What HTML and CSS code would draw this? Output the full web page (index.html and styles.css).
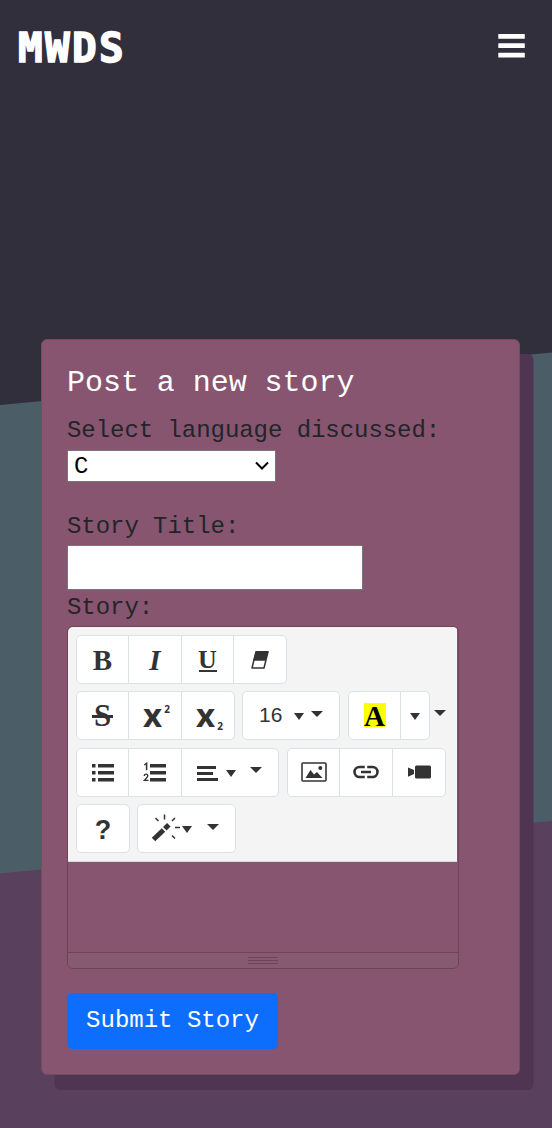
FILE: index.html
```html
<!DOCTYPE html>
<html lang="en">
<head>
<meta charset="utf-8">
<title>MWDS</title>
<link rel="stylesheet" href="styles.css">
</head>
<body>
<svg class="backdrop" viewBox="0 0 552 1128" preserveAspectRatio="none" aria-hidden="true"><path fill="#4b5d67" d="M0 405 552 352.500V1128H0z"/><path fill="#59405c" d="M0 873.500 552 821V1128H0z"/></svg>
<header class="navbar">
  <a class="brand">MWDS</a>
  <svg class="menu" width="28" height="26" viewBox="0 0 28 26" fill="#fff"><rect x=".3" y="1" width="26.500" height="4.800" rx=".6"/><rect x=".3" y="10.200" width="26.500" height="4.800" rx=".6"/><rect x=".3" y="19.700" width="26.500" height="4.800" rx=".6"/></svg>
</header>
<main class="card">
  <h1 class="title">Post a new story</h1>
  <label class="label">Select language discussed:</label>
  <div class="select"><span>C</span><svg width="16" height="12" viewBox="0 0 16 12" fill="none" stroke="#000" stroke-width="2"><path d="m2 2.500 6 6 6-6"/></svg></div>
  <label class="label label-title">Story Title:</label>
  <input class="input" type="text">
  <label class="label label-story">Story:</label>
  <section class="editor">
    <div class="toolbar">
      <div class="row">
        <div class="group">
          <button class="btn"><b class="glyph">B</b></button>
          <button class="btn"><b class="glyph italic">I</b></button>
          <button class="btn"><b class="glyph under">U</b></button>
          <button class="btn"><svg width="20" height="20" viewBox="0 0 20 20"><path d="M6 1.700h12L14 18H2z" fill="#fff" stroke="#333" stroke-width="1.500" stroke-linejoin="round"/><path d="M6 1.200h12.500l-3 9.500H3z" fill="#333"/></svg></button>
        </div>
      </div>
      <div class="row">
        <div class="group">
          <button class="btn"><b class="glyph strike">S</b></button>
          <button class="btn"><span class="script">x<small class="sup">2</small></span></button>
          <button class="btn"><span class="script">x<small class="sub">2</small></span></button>
        </div>
        <div class="group size">
          <button class="btn"><span class="number">16</span><i class="tri"></i><i class="caret"></i></button>
        </div>
        <div class="group color">
          <button class="btn"><b class="mark">A</b></button>
          <button class="btn narrow"><i class="tri"></i></button>
        </div>
        <i class="caret outside"></i>
      </div>
      <div class="row">
        <div class="group lists">
          <button class="btn"><svg width="24" height="20" viewBox="0 0 24 20" fill="#333"><path d="M1 2h3.500v3.500H1zm6 0h16v3.500H7zM1 9h3.500v3.500H1zm6 0h16v3.500H7zM1 16h3.500v3.500H1zm6 0h16v3.500H7z"/></svg></button>
          <button class="btn"><svg width="24" height="20" viewBox="0 0 24 20" fill="#333"><path d="M7 2h16v3.500H7zm0 7h16v3.500H7zm0 7h16v3.500H7z"/><path d="M1.300 3 3.600 1.300V8.300" fill="none" stroke="#333" stroke-width="1.500"/><path d="M1.300 13.900q0-1.800 1.800-1.800 1.700 0 1.700 1.600 0 1-3.500 4.700H5.500" fill="none" stroke="#333" stroke-width="1.400"/></svg></button>
          <button class="btn align"><svg width="22" height="18" viewBox="0 0 22 18" fill="#333"><path d="M1 2h19v3H1zm0 6h16v3H1zm0 6h21v3H1z"/></svg><i class="tri"></i><i class="caret"></i></button>
        </div>
        <div class="group">
          <button class="btn"><svg width="26" height="20" viewBox="0 0 26 20"><rect x="1" y="1" width="24" height="18" rx="1" fill="none" stroke="#333" stroke-width="1.600"/><path d="m4.500 16 5-8 3.500 4.500 3-2.500 5.500 6z" fill="#333"/><circle cx="19.300" cy="6" r="2" fill="#333"/></svg></button>
          <button class="btn"><svg width="26" height="14" viewBox="0 0 26 14" fill="none" stroke="#333" stroke-width="2.600"><path d="M11.800 2H6.500a5 5 0 0 0 0 10h5.300M14.200 2h5.300a5 5 0 0 1 0 10h-5.300M8 7h10"/></svg></button>
          <button class="btn"><svg width="24" height="14" viewBox="0 0 24 14" fill="#333"><path d="M1 2.500 7 5v4l-6 2.800z"/><rect x="8" y=".5" width="16" height="13" rx="1.500"/></svg></button>
        </div>
      </div>
      <div class="row">
        <div class="group"><button class="btn help">?</button></div>
        <div class="group magic">
          <button class="btn"><svg width="30" height="28" viewBox="0 0 30 28"><path d="m2.500 25.500 10-9.500" stroke="#333" stroke-width="5"/><path d="m13.800 14.800 4-4" stroke="#333" stroke-width="5"/><path d="M13.500.5v5M4.500 4l3 3M24 4l-3 3M24 13.500h5M21 21.500l3 3" stroke="#333" stroke-width="1.500"/></svg><i class="tri"></i><i class="caret"></i></button>
        </div>
      </div>
    </div>
    <div class="editable"></div>
    <div class="statusbar"><i></i><i></i><i></i></div>
  </section>
  <button class="submit">Submit Story</button>
</main>
</body>
</html>
```
FILE: styles.css
```css
* { box-sizing: border-box; }
body {
  margin: 0;
  height: 1128px;
  overflow: hidden;
  background: #322f3d;
  font-family: "Liberation Mono", monospace;
  font-size: 24px;
  color: #212529;
}
svg { display: block; flex: none; }
.backdrop { position: absolute; inset: 0; width: 100%; height: 1128px; z-index: -1; }
.navbar {
  height: 339px;
  padding: 18px 26px 0 18px;
  display: flex;
  justify-content: space-between;
  align-items: flex-start;
}
.brand {
  font: bold 41px/60px "DejaVu Sans Mono", monospace;
  letter-spacing: 2.300px;
  -webkit-text-stroke: 1.500px #fff;
  color: #fff;
}
.menu { margin-top: 15px; }
.card {
  width: 479px;
  height: 736px;
  margin-left: 41px;
  padding: 25px;
  display: flex;
  flex-direction: column;
  align-items: flex-start;
  background: #87556f;
  border: 1px solid #754b62;
  border-radius: 6px;
  box-shadow: 13.500px 15px 0 #503552;
}
.title { margin: 0; font-size: 30px; font-weight: 400; line-height: 37px; height: 36px; color: #fff; letter-spacing: -.04px; }
.label { line-height: 36px; margin-top: 12px; height: 37px; letter-spacing: -.05px; }
.select {
  width: 209px;
  height: 32px;
  padding: 0 5px 0 6px;
  display: flex;
  align-items: center;
  justify-content: space-between;
  background: #fff;
  border: 1px solid #767676;
  color: #000;
}
.label-title { margin-top: 27px; }
.input { width: 296px; height: 45px; border: 1px solid #767676; background: #fff; padding: 0; outline: 0; margin-top: -1px; }
.label-story { margin-top: 0; height: 36px; }
.editor {
  width: 392px;
  height: 343px;
  border: 1px solid #6d445a;
  border-radius: 6px;
  overflow: hidden;
}
.toolbar {
  width: 389px;
  height: 235px;
  padding: 8px 0 0 8px;
  display: flex;
  flex-direction: column;
  gap: 7.300px;
  background: #f4f4f4;
  border-bottom: 1px solid #dcd9dd;
}
.row { display: flex; gap: 7px; height: 49px; }
.group { display: flex; height: 49px; border: 1px solid #dae0e5; border-radius: 5px; background: #fff; overflow: hidden; }
.btn {
  width: 51px;
  height: 47px;
  padding: 0;
  display: flex;
  align-items: center;
  justify-content: center;
  border: 0;
  background: none;
  color: #333;
}
.btn + .btn { width: 53px; border-left: 1px solid #dae0e5; }
.row:first-child .group { width: 211px; }
.row:first-child .btn:nth-child(3) { width: 52px; }
.row:first-child svg { margin-right: 1px; }
.glyph { font: bold 29px/30px "Liberation Serif", serif; }
.italic { font-style: italic; }
.under { line-height: 23px; border-bottom: 2px solid #333; width: 18px; display: flex; justify-content: center; height: 24px; font-size: 26px; }
.strike { padding: 0 2px; font-size: 31px; background: linear-gradient(#333, #333) 0 14px / 100% 3px no-repeat; }
.script { display: flex; font: bold 33px/34px "Noto Sans", sans-serif; padding-bottom: 2px; margin-left: 3px; }
.script small { font-size: 10px; line-height: 12px; margin-left: 2px; }
.sup { padding-top: 5px; }
.sub { padding-top: 22px; }
.size { width: 98px; }
.size .btn { width: 96px; justify-content: flex-start; padding-left: 16px; }
.number { font: 21px/30px "Liberation Sans", sans-serif; margin-top: -2px; }
.tri { border: 5px solid transparent; border-top: 7.500px solid #333; border-bottom: 0; margin-top: 2px; }
.caret { border: 6.500px solid transparent; border-top: 6.500px solid #333; border-bottom: 0; }
.size .tri { margin-left: 12px; }
.size .caret { margin: -4px 0 0 7px; }
.color { width: 82px; margin-left: 1px; }
.btn + .btn.narrow { width: 29px; }
.mark { width: 22px; height: 24px; background: #ff0; color: #000; font: bold 29px/27px "Liberation Serif", serif; display: flex; justify-content: center; margin-top: -2px; }
.outside { margin: 19px 0 0 -3px; }
.lists { width: 203px; margin-right: 1px; }
.btn + .btn.align { width: 97px; justify-content: flex-start; padding-left: 14px; }
.align svg { margin-top: 1px; }
.align .tri { margin: 2px 0 0 8px; }
.align .caret { margin: -5px 0 0 14px; }
.btn.help { width: 52px; font: bold 27px/34px "Liberation Sans", sans-serif; padding-top: 3px; }
.magic { width: 99px; }
.magic .btn { width: 97px; justify-content: flex-start; padding-left: 13px; }
.magic .tri { margin: 3px 0 0 1px; }
.magic .caret { margin: -2px 0 0 15px; }
.editable { height: 90px; }
.statusbar { height: 17px; padding-top: 4px; display: flex; flex-direction: column; align-items: center; gap: 2px; background: #865b72; border-top: 1px solid #6d445a; }
.statusbar i { width: 30px; height: 1px; background: #6d445a; }
.submit {
  width: 211px;
  height: 56px;
  margin-top: 24px;
  padding: 0 0 1px;
  border: 0;
  border-radius: 5px;
  background: #0d6efd;
  color: #fff;
  font: 24px/37px "Liberation Mono", monospace;
}
```
